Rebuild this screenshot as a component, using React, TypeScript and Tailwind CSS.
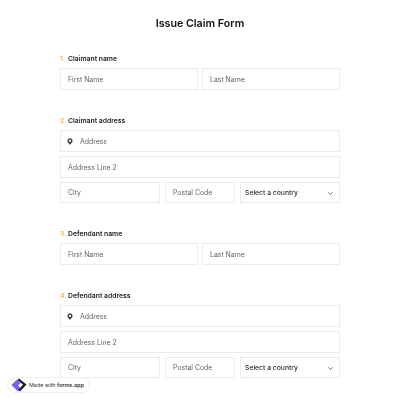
import { ChevronDown } from 'lucide-react';

const inputBox = "border border-[#ebebeb] flex items-center";
const tall = "h-[22px] pt-[2px] pl-[7px] pr-2 text-[6.9px] text-[#646464]";
const short = "h-[21px] pt-[1px] pl-[7px] pr-2 text-[6.9px] text-[#646464]";

const Label = ({ num, text }: { num: number; text: string }) => (
  <div className="h-[10px] flex items-center pt-[1px] text-[6.8px] font-semibold text-[#222] mb-[4px]">
    <span className="text-[#f5b94e] w-[8px]">{num}.</span>
    {text}
  </div>
);

const NameFields = () => (
  <div className="flex gap-[4px]">
    <div className={`${inputBox} ${tall} w-[138px]`}>First Name</div>
    <div className={`${inputBox} ${tall} w-[138px]`}>Last Name</div>
  </div>
);

const AddressFields = () => (
  <div className="flex flex-col gap-[4px]">
    <div className={`${inputBox} ${tall} w-full`}>
      <svg width="6" height="7" viewBox="0 0 7 8" className="ml-[-1px] mr-[7px] mt-[-1px]">
        <path fillRule="evenodd" d="M3.5 0.3C1.7 0.3 0.5 1.6 0.5 3.2C0.5 5 2.4 6.9 3.5 7.7C4.6 6.9 6.5 5 6.5 3.2C6.5 1.6 5.3 0.3 3.5 0.3ZM3.5 2C4.2 2 4.7 2.5 4.7 3.2C4.7 3.9 4.2 4.4 3.5 4.4C2.8 4.4 2.3 3.9 2.3 3.2C2.3 2.5 2.8 2 3.5 2Z" fill="#444" />
      </svg>
      Address
    </div>
    <div className={`${inputBox} ${tall} w-full`}>Address Line 2</div>
    <div className="flex">
      <div className={`${inputBox} ${short} w-[100px] mr-[5px]`}>City</div>
      <div className={`${inputBox} ${short} w-[70px] mr-[5px]`}>Postal Code</div>
      <div className={`${inputBox} h-[21px] pt-[1px] w-[100px] pl-[4px] pr-[5px] justify-between text-[6.8px] text-[#2e2e2e] font-medium`}>
        Select a country
        <ChevronDown size={7} strokeWidth={2.5} className="text-[#333]" />
      </div>
    </div>
  </div>
);

export default function App() {
  return (
    <div className="relative w-[400px] h-[400px] overflow-hidden bg-white">
      <div className="transform-gpu font-['Inter',sans-serif]">
        <h1 className="pt-[16px] h-[54px] text-center text-[10.7px] leading-[16px] font-semibold text-[#111]">
          Issue Claim Form
        </h1>
        <div className="w-[280px] ml-[60px]">
          <Label num={1} text="Claimant name" />
          <NameFields />
          <div className="h-[26px]" />
          <Label num={2} text="Claimant address" />
          <AddressFields />
          <div className="h-[26px]" />
          <Label num={3} text="Defendant name" />
          <NameFields />
          <div className="h-[26px]" />
          <Label num={4} text="Defendant address" />
          <AddressFields />
        </div>
      </div>
      <div className="absolute left-[7px] top-[377px] h-[16px] w-[83px] rounded-full bg-white border border-[#efeff2] flex items-center text-[5.4px] text-[#333] pl-[3px] whitespace-nowrap font-['Inter',sans-serif]">
        <svg width="16" height="14" viewBox="0 0 16 14" className="mr-[2px] shrink-0">
          <path d="M0.5 7 L6 1.5 L9.5 5 L7 7.5 L10 10.5 L7 13.5 Z" fill="#7c5cf0" />
          <path d="M8 0.5 L15.5 6.5 L9 13.5 L7.5 12 L12 6.5 L6.5 2 Z" fill="#1b1b2e" />
        </svg>
        <span>Made with&nbsp;</span>
        <span className="font-semibold">forms.app</span>
      </div>
    </div>
  );
}
